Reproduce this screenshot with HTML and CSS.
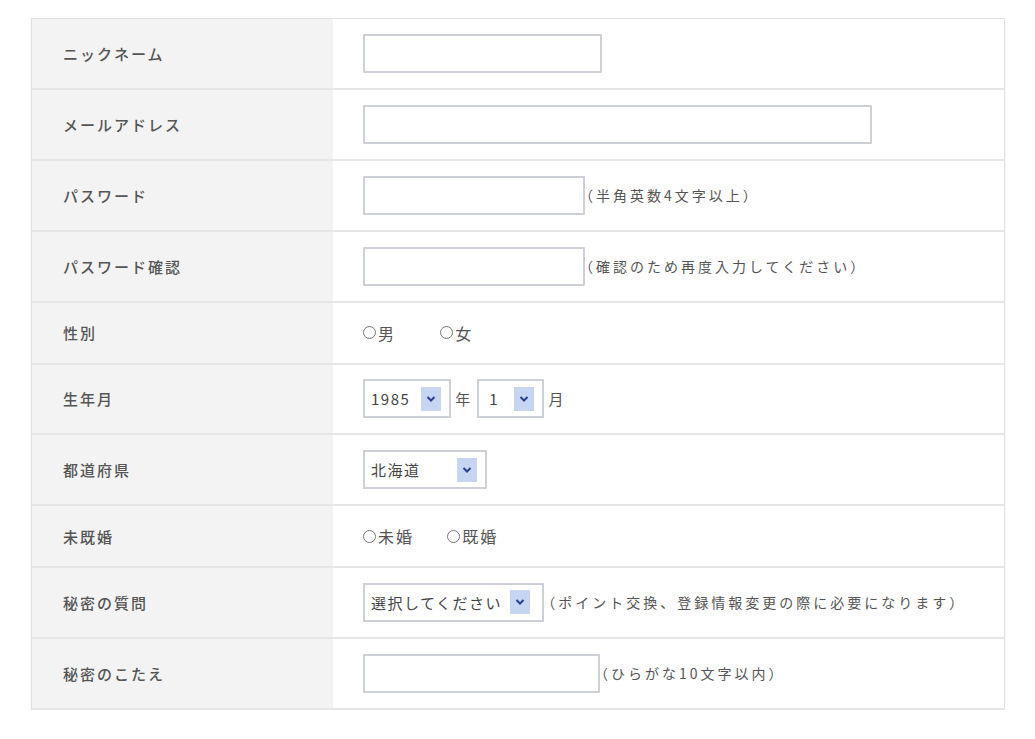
FILE: index.html
```html
<!DOCTYPE html>
<html lang="ja">
<head>
    <meta charset="UTF-8">
    <title>会員登録</title>
    <link rel="stylesheet" href="styles.css">
</head>
<body>
    <div class="page">
        <table class="entry">
            <tr class="tall">
                <th>ニックネーム</th>
                <td><input type="text" class="field w-nick"></td>
            </tr>
            <tr class="tall">
                <th>メールアドレス</th>
                <td><input type="text" class="field w-mail"></td>
            </tr>
            <tr class="tall">
                <th>パスワード</th>
                <td><input type="password" class="field w-pass"><span class="note">（半角英数4文字以上）</span></td>
            </tr>
            <tr class="tall">
                <th>パスワード確認</th>
                <td><input type="password" class="field w-pass"><span class="note">（確認のため再度入力してください）</span></td>
            </tr>
            <tr class="short">
                <th>性別</th>
                <td>
                    <label class="radio"><span class="dot"></span>男</label>
                    <label class="radio gap-sex"><span class="dot"></span>女</label>
                </td>
            </tr>
            <tr class="tall">
                <th>生年月</th>
                <td>
                    <div class="select w-year"><span class="val">1985</span><span class="arrow"><svg width="10" height="8" viewBox="0 0 10 8"><path d="M1.5 2 L5 5.5 L8.5 2" fill="none" stroke="#2a3f8f" stroke-width="2"/></svg></span></div>
                    <span class="unit">年</span>
                    <div class="select w-month"><span class="val">1</span><span class="arrow"><svg width="10" height="8" viewBox="0 0 10 8"><path d="M1.5 2 L5 5.5 L8.5 2" fill="none" stroke="#2a3f8f" stroke-width="2"/></svg></span></div>
                    <span class="unit">月</span>
                </td>
            </tr>
            <tr class="tall">
                <th>都道府県</th>
                <td>
                    <div class="select w-pref"><span class="val">北海道</span><span class="arrow"><svg width="10" height="8" viewBox="0 0 10 8"><path d="M1.5 2 L5 5.5 L8.5 2" fill="none" stroke="#2a3f8f" stroke-width="2"/></svg></span></div>
                </td>
            </tr>
            <tr class="short">
                <th>未既婚</th>
                <td>
                    <label class="radio"><span class="dot"></span>未婚</label>
                    <label class="radio gap-mar"><span class="dot"></span>既婚</label>
                </td>
            </tr>
            <tr class="tall">
                <th>秘密の質問</th>
                <td>
                    <div class="select w-quest"><span class="val">選択してください</span><span class="arrow"><svg width="10" height="8" viewBox="0 0 10 8"><path d="M1.5 2 L5 5.5 L8.5 2" fill="none" stroke="#2a3f8f" stroke-width="2"/></svg></span></div>
                    <span class="note">（ポイント交換、登録情報変更の際に必要になります）</span>
                </td>
            </tr>
            <tr class="tall">
                <th>秘密のこたえ</th>
                <td><input type="text" class="field w-answer"><span class="note">（ひらがな10文字以内）</span></td>
            </tr>
        </table>
    </div>
</body>
</html>
```

FILE: styles.css
```css
body {
    margin: 0;
    background-color: #fff;
    font-family: "Noto Sans CJK JP", "Noto Sans", sans-serif;
    color: #444;
}

.page {
    padding: 18px 30px 0 31px;
}

/* Form table */
.entry {
    width: 974px;
    border-collapse: collapse;
    border: 1px solid #e2e2e2;
    box-shadow: 0 1px 2px rgba(0, 0, 0, 0.08);
}

.entry tr {
    border-bottom: 2px solid #e6e6e6;
}

.entry tr.tall {
    height: 70.75px;
}

.entry tr.short {
    height: 62px;
}

.entry th {
    width: 270px;
    padding: 0 0 0 31px;
    text-align: left;
    vertical-align: middle;
    background-color: #f3f3f3;
    font-size: 15px;
    font-weight: 500;
    color: #555;
    letter-spacing: 2px;
}

.entry td {
    padding: 0 0 0 30px;
    vertical-align: middle;
    font-size: 14px;
    white-space: nowrap;
}

.field {
    box-sizing: border-box;
    height: 39px;
    margin: 0;
    border: 2px solid #cdd1d7;
    border-radius: 1px;
    background: #fff;
    vertical-align: middle;
}

.w-nick { width: 239px; }
.w-mail { width: 509px; }
.w-pass { width: 222px; }
.w-answer { width: 237px; }

.note {
    margin-left: -6px;
    vertical-align: middle;
    font-size: 14px;
    color: #555;
    letter-spacing: 3px;
}

/* Radio buttons */
.radio {
    display: inline-flex;
    align-items: center;
    font-size: 16px;
    color: #555;
    letter-spacing: 2px;
}

.dot {
    width: 13px;
    height: 13px;
    margin-right: 2px;
    border: 1.5px solid #777;
    border-radius: 50%;
    box-sizing: border-box;
    background: #fff;
}

.gap-sex { margin-left: 41px; }
.gap-mar { margin-left: 30px; }

/* Select boxes */
.select {
    box-sizing: border-box;
    display: inline-flex;
    align-items: center;
    justify-content: space-between;
    height: 39px;
    padding: 0 8px 0 6px;
    border: 2px solid #cdd1d7;
    background: #fff;
    vertical-align: middle;
    font-size: 15px;
    color: #444;
    letter-spacing: 1.5px;
}

.select .arrow {
    display: flex;
    align-items: center;
    justify-content: center;
    width: 20px;
    height: 24px;
    background: #c6d5f2;
}

.w-year { width: 88px; }
.w-month { width: 67px; padding-left: 10px; }
.w-pref { width: 124px; }
.w-quest { width: 181px; padding-right: 12px; }

.unit {
    margin: 0 4px 0 1px;
    vertical-align: middle;
    font-size: 15px;
    color: #555;
}
```
